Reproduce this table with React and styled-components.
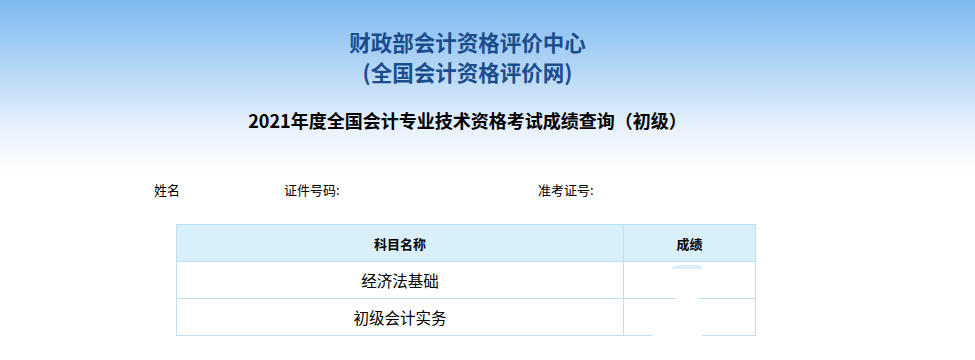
import styled, { createGlobalStyle } from 'styled-components'

const GlobalStyle = createGlobalStyle`
  body {
    margin: 0;
    background: #fff;
    font-family: "Microsoft YaHei", "Noto Sans CJK SC", "Liberation Sans", sans-serif;
    color: #000;
  }
`

const Page = styled.div`
  width: 975px;
  height: 360px;
  overflow: hidden;
  background: linear-gradient(to bottom, #7db9f0 0px, #b9d9f6 75px, #e6f0fc 125px, #ffffff 172px, #ffffff 100%);
`

const Header = styled.div`
  width: 935px;
  padding-top: 27px;
  display: flex;
  flex-direction: column;
  align-items: center;
`

const SiteTitle = styled.h1`
  margin: 0;
  font-size: 21.5px;
  line-height: 30px;
  font-weight: bold;
  color: #1b4d8e;
  text-align: center;
`

const QueryTitle = styled.h2`
  margin: 21px 0 0;
  font-size: 18px;
  line-height: 24px;
  font-weight: bold;
  color: #000;
  text-align: center;
`

const InfoRow = styled.div`
  display: flex;
  margin-top: 47px;
  padding-left: 154px;
  height: 20px;
  align-items: center;
`

const Field = styled.div`
  width: ${p => p.$width}px;
  font-size: 13px;
  color: #000;
  white-space: nowrap;
`

const TableWrap = styled.div`
  margin-top: 25px;
  padding-left: 176px;
`

const ScoreTable = styled.table`
  width: 580px;
  border-collapse: collapse;
  font-size: 15.5px;

  td, th {
    border: 1px solid #b9e0f3;
    height: 36px;
    padding: 0;
    text-align: center;
  }
`

const HeadCell = styled.th`
  background: #d9f0fb;
  font-size: 13px;
  font-weight: bold;
  width: ${p => p.$width}px;
`

const Cell = styled.td`
  background: #fff;
  color: #000;
  position: relative;
`

/* blanked-out score value, it eats part of the cell border */
const Masked = styled.span`
  position: absolute;
  left: ${p => p.$left}px;
  width: ${p => p.$width}px;
  bottom: -2px;
  height: 4px;
  background: #fff;
`

const Smudge = styled.span`
  position: absolute;
  left: 48px;
  top: 3px;
  width: 30px;
  height: 4px;
  border-radius: 8px 8px 0 0;
  background: #dcf0fb;
`

const subjects = [
  { name: '经济法基础', mask: [52, 22], smudge: true },
  { name: '初级会计实务', mask: [28, 50] },
]

export default function App() {
  return (
    <Page>
      <GlobalStyle />
      <Header>
        <SiteTitle>财政部会计资格评价中心</SiteTitle>
        <SiteTitle>(全国会计资格评价网)</SiteTitle>
        <QueryTitle>2021年度全国会计专业技术资格考试成绩查询（初级）</QueryTitle>
      </Header>
      <InfoRow>
        <Field $width={130}>姓名</Field>
        <Field $width={254}>证件号码:</Field>
        <Field $width={200}>准考证号:</Field>
      </InfoRow>
      <TableWrap>
        <ScoreTable>
          <thead>
            <tr>
              <HeadCell $width={447}>科目名称</HeadCell>
              <HeadCell $width={131}>成绩</HeadCell>
            </tr>
          </thead>
          <tbody>
            {subjects.map(s => (
              <tr key={s.name}>
                <Cell>{s.name}</Cell>
                <Cell>
                  {s.smudge && <Smudge />}
                  <Masked $left={s.mask[0]} $width={s.mask[1]} />
                </Cell>
              </tr>
            ))}
          </tbody>
        </ScoreTable>
      </TableWrap>
    </Page>
  )
}
